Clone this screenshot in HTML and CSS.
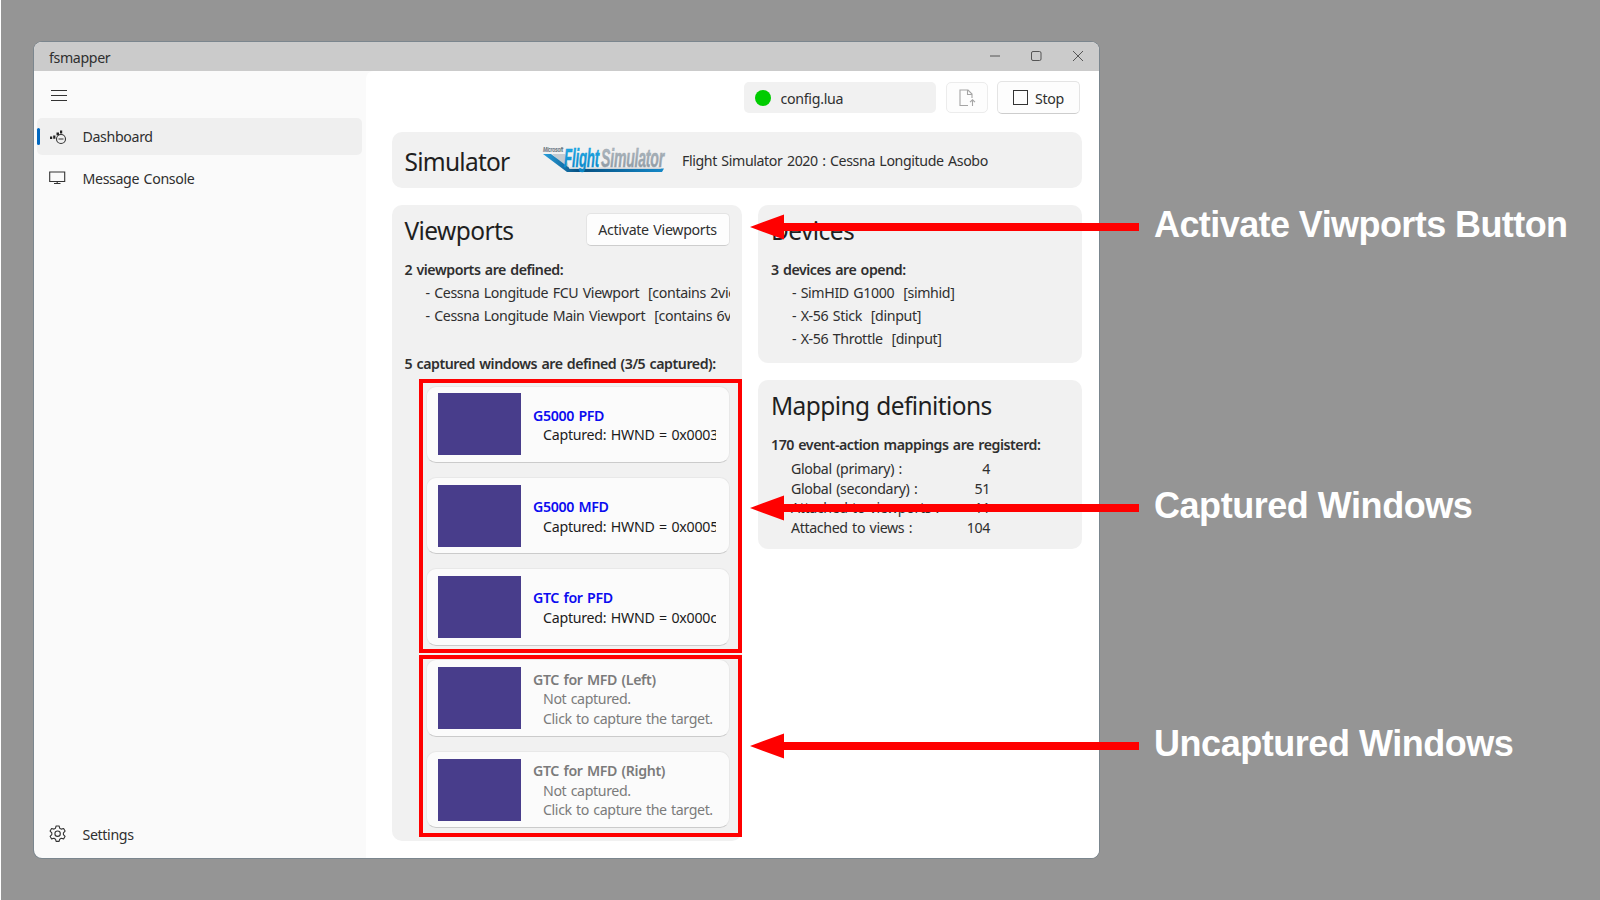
FILE: index.html
```html
<!DOCTYPE html>
<html lang="en">
<head>
<meta charset="utf-8">
<title>fsmapper</title>
<link rel="stylesheet" href="styles.css">
</head>
<body>
<div class="window">
  <header class="titlebar">
    <span class="app-name">fsmapper</span>
    <svg class="controls" width="100" height="14" viewBox="0 0 100 14">
      <path d="M2 7h10"/><rect x="43.5" y="2.500" width="9.500" height="9" rx="1.500"/><path d="M85 2l10 10M95 2L85 12"/>
    </svg>
  </header>
  <div class="body">
    <nav class="nav">
      <svg class="burger" width="16" height="12" viewBox="0 0 16 12"><path d="M0 .5h16M0 5.500h16M0 10.500h16"/></svg>
      <a class="item active">
        <svg class="ico" width="18" height="18" viewBox="0 0 18 18"><path class="fill" d="M1 8.500h2.200v2.500H1zM4.200 7.500h2.200v3.200H4.200zM7.500 4.500h2.500v2.700H7.500zM11 2.500h2.200v3H11z"/><circle cx="12" cy="11" r="4.500"/><path d="M9.500 11h5"/></svg>
        <span>Dashboard</span></a>
      <a class="item">
        <svg class="ico" width="18" height="18" viewBox="0 0 18 18"><path d="M.7 2h15v9.500h-15zM8.200 11.500v2M5 13.500h6.500"/></svg>
        <span>Message Console</span></a>
      <a class="item settings">
        <svg class="ico" width="18" height="18" viewBox="0 0 18 18"><path stroke-linejoin="round" d="M7.100 1h3l.6 2.200 1.500.9 2.400-.6 1.500 2.600-1.700 1.700v1.800l1.700 1.700-1.500 2.600-2.400-.6-1.500.9-.6 2.200h-3l-.6-2.200-1.500-.9-2.400.6-1.500-2.600 1.700-1.700V7.800L1.100 6.100l1.500-2.600 2.400.6 1.500-.9z"/><circle cx="8.600" cy="8.700" r="2.700"/></svg>
        <span>Settings</span></a>
    </nav>
    <main class="main">
      <div class="toolbar">
        <div class="config"><i class="dot"></i><span>config.lua</span></div>
        <button class="btn file"><svg width="18" height="18" viewBox="0 0 18 18"><path d="M10 16.500H2V1h8l4 4v4M9.500 1v4.500H14M14.500 17v-6M12 13.200l2.500-2.400 2.500 2.400"/></svg></button>
        <button class="btn stop"><i class="sq"></i><span>Stop</span></button>
      </div>
      <section class="card sim">
        <h2 class="h-sim">Simulator</h2>
        <svg class="logo" width="124" height="30" viewBox="0 0 124 30">
          <defs>
            <linearGradient id="blue" x1="0" y1="0" x2="1" y2="0"><stop offset="0" stop-color="#2a9fdc"/><stop offset=".3" stop-color="#064f80"/><stop offset="1" stop-color="#1488c8"/></linearGradient>
            <linearGradient id="fl" x1="0" y1="0" x2="0" y2="1"><stop offset="0" stop-color="#25b2ee"/><stop offset="1" stop-color="#087fc0"/></linearGradient>
            <linearGradient id="gr" x1="0" y1="0" x2="0" y2="1"><stop offset="0" stop-color="#b8c1c8"/><stop offset="1" stop-color="#87939d"/></linearGradient>
          </defs>
          <path d="M10 9h13l4 14H24z" fill="#c3cbd1"/>
          <path d="M1 9h8l19 14.500h94l-2 3.500H25z" fill="url(#blue)"/>
          <path d="M28 22.500h90l1.500 1.500H27z" fill="#cfd5d9"/>
          <g font-family="Liberation Sans" font-weight="700" font-style="italic">
            <text x="1" y="7.300" font-size="6.500" textLength="20" lengthAdjust="spacingAndGlyphs" fill="#66727c">Microsoft</text>
            <text class="flight" x="22" y="21.500" font-size="26" textLength="35" lengthAdjust="spacingAndGlyphs" fill="url(#fl)">Flight</text>
            <text class="simul" x="59" y="21.500" font-size="26" textLength="63" lengthAdjust="spacingAndGlyphs" fill="url(#gr)">Simulator</text>
          </g>
        </svg>
        <span class="aircraft">Flight Simulator 2020 : Cessna Longitude Asobo</span>
      </section>
      <div class="columns">
        <section class="card viewports">
          <div class="head"><h2>Viewports</h2><button class="btn activate"><span>Activate Viewports</span></button></div>
          <h3>2 viewports are defined:</h3>
          <ul class="list">
            <li>- Cessna Longitude FCU Viewport&nbsp; [contains 2views]</li>
            <li>- Cessna Longitude Main Viewport&nbsp; [contains 6views]</li>
          </ul>
          <h3 class="s-cap">5 captured windows are defined (3/5 captured):</h3>
          <div class="captures">
            <div class="cap"><i class="thumb"></i><div class="info"><b>G5000 PFD</b><p>Captured: HWND = 0x0003</p></div></div>
            <div class="cap"><i class="thumb"></i><div class="info"><b>G5000 MFD</b><p>Captured: HWND = 0x0005</p></div></div>
            <div class="cap"><i class="thumb"></i><div class="info"><b>GTC for PFD</b><p>Captured: HWND = 0x000c</p></div></div>
            <div class="cap off"><i class="thumb"></i><div class="info"><b>GTC for MFD (Left)</b><p>Not captured.</p><p>Click to capture the target.</p></div></div>
            <div class="cap off"><i class="thumb"></i><div class="info"><b>GTC for MFD (Right)</b><p>Not captured.</p><p>Click to capture the target.</p></div></div>
          </div>
        </section>
        <div class="right">
          <section class="card devices">
            <div class="head"><h2>Devices</h2></div>
            <h3>3 devices are opend:</h3>
            <ul class="list">
              <li>- SimHID G1000&nbsp; [simhid]</li>
              <li>- X-56 Stick&nbsp; [dinput]</li>
              <li>- X-56 Throttle&nbsp; [dinput]</li>
            </ul>
          </section>
          <section class="card mapping">
            <div class="head"><h2>Mapping definitions</h2></div>
            <h3>170 event-action mappings are registerd:</h3>
            <dl class="stats">
              <dt>Global (primary) :</dt><dd>4</dd>
              <dt>Global (secondary) :</dt><dd>51</dd>
              <dt>Attached to viewports :</dt><dd>11</dd>
              <dt>Attached to views :</dt><dd>104</dd>
            </dl>
          </section>
        </div>
      </div>
    </main>
  </div>
</div>
<div class="frame captured"></div>
<div class="frame uncaptured"></div>
<svg class="arrow a1" width="390" height="26" viewBox="0 0 390 26"><path d="M0 13L34 .5V9h355v8H34v8.500z"/></svg>
<svg class="arrow a2" width="390" height="26" viewBox="0 0 390 26"><path d="M0 13L34 .5V9h355v8H34v8.500z"/></svg>
<svg class="arrow a3" width="390" height="26" viewBox="0 0 390 26"><path d="M0 13L34 .5V9h355v8H34v8.500z"/></svg>
<div class="note a1">Activate Viwports Button</div>
<div class="note a2">Captured Windows</div>
<div class="note a3">Uncaptured Windows</div>
</body>
</html>
```
FILE: styles.css
```css
* { box-sizing: border-box; margin: 0; padding: 0; }
body {
  position: relative; width: 1600px; height: 900px; overflow: hidden;
  background: #959595; border-left: 1px solid #fff;
  font: 14.2px/20px "Noto Sans", sans-serif; letter-spacing: -.36px; word-spacing: 1.1px; color: #2f2f2f;
}
svg { display: block; flex: none; fill: none; stroke: #333; stroke-width: 1.1; }
svg text, .logo path { stroke: none; }
i { display: block; flex: none; }
span, li, h2, h3, b, p, dt, dd, .note { white-space: nowrap; }
h2 { font-size: 24.5px; line-height: 32px; font-weight: 400; color: #1f1f1f; letter-spacing: -.6px; }
h3 { font-size: 14.2px; line-height: 20px; font-weight: 600; letter-spacing: -.46px; }
ul { list-style: none; }

.window {
  position: absolute; left: 33px; top: 42px; width: 1064.500px; height: 815.500px;
  display: flex; flex-direction: column; overflow: hidden;
  background: #fafafa; border-radius: 8px; box-shadow: 0 0 0 1px #7b868e;
}
.titlebar {
  flex: none; height: 29px; background: #cbcbcb;
  display: flex; align-items: center; justify-content: space-between; padding: 3px 11px 0 15px;
}
.controls { stroke: #555; stroke-width: 1; margin-top: -5px; }
.body { flex: 1; display: flex; min-height: 0; }
.nav { width: 332px; flex: none; padding: 19px 4px 5px 3px; display: flex; flex-direction: column; }
.burger { margin: 0 0 16px 14px; }
.item { height: 37px; margin-bottom: 5px; display: flex; align-items: center; padding-left: 12px; gap: 15.500px; border-radius: 5px; position: relative; }
.item span { padding-top: 1px; }
.item.active { background: #efefef; }
.item.active::before { content: ""; position: absolute; left: 0; top: 10px; width: 3px; height: 17px; border-radius: 2px; background: #0067c0; }
.fill { fill: #222; stroke: none; }
.settings { margin: auto 0 0; }

.main { flex: 1; background: #fff; border-top-left-radius: 8px; padding: 10px 16.500px 17px 26px; display: flex; flex-direction: column; }
.toolbar { display: flex; justify-content: flex-end; align-items: center; gap: 10px; height: 33px; margin: 0 2px 18px 0; }
.config { width: 192px; height: 31px; background: #f1f1f1; border-radius: 5px; display: flex; align-items: center; gap: 9.500px; padding-left: 11px; }
.config span, .stop span { padding-top: 2px; letter-spacing: -.3px; }
.dot { width: 16px; height: 16px; border-radius: 50%; background: #00cc00; }
.btn { font: inherit; letter-spacing: inherit; word-spacing: inherit; color: inherit; background: #fdfdfd; border: 1px solid #e4e4e4; border-bottom-color: #cdcdcd; border-radius: 5px; display: flex; align-items: center; justify-content: center; }
.file { width: 42px; height: 31px; border-color: #ececec; margin-right: -1px; }
.file svg { stroke: #a5a5a5; }
.stop { width: 83px; height: 33px; gap: 7px; }
.sq { width: 15px; height: 15px; border: 1.3px solid #333; }
.card { background: #f1f1f1; border-radius: 10px; }
.sim { height: 56px; display: flex; align-items: center; padding-left: 12.500px; margin-bottom: 17px; }
.h-sim { width: 137.500px; padding-top: 3px; letter-spacing: -.75px; }
.logo { margin-right: 16px; }
.flight { stroke: #109bd8; stroke-width: .5; }
.simul { stroke: #9ba6ae; stroke-width: .5; }
.aircraft { padding-top: 2px; letter-spacing: -.39px; }
.columns { flex: 1; display: flex; gap: 16px; min-height: 0; }
.viewports { width: 350px; padding: 8px 12px 8px 12.500px; }
.head { display: flex; justify-content: space-between; align-items: center; height: 36px; margin-bottom: 11px; }
.activate { width: 144px; height: 33px; margin: -3px .5px 0 0; letter-spacing: -.3px; }
.activate span { padding-top: 1px; }
.list { padding: 2px 0 0 21px; overflow: hidden; }
.list li { line-height: 22.800px; }
.s-cap { margin: 26px 0 12px; }
.captures { margin-left: 21px; width: 304px; display: flex; flex-direction: column; gap: 13.800px; }
.cap { height: 77.500px; display: flex; align-items: center; background: #fbfbfb; border: 1px solid #e8e8e8; border-bottom-color: #cbcbcb; border-radius: 10px; padding: 0 12.500px 0 11.500px; gap: 12px; }
.thumb { width: 83px; height: 62px; background: #483d8b; }
.info { flex: 1; min-width: 0; overflow: hidden; line-height: 19.500px; padding-top: 2px; }
.info b { display: block; font-weight: 600; color: #0b0bf0; }
.info p { margin-left: 10px; color: #1c1c1c; overflow: hidden; letter-spacing: -.25px; word-spacing: 1px; }
.off .info b, .off .info p { color: #7b7b7b; }
.off .info p { letter-spacing: -.38px; }
.right { flex: 1; display: flex; flex-direction: column; gap: 17px; }
.devices { height: 158px; padding: 8px 13px; }
.mapping { height: 169px; padding: 8px 13px; }
.stats { display: grid; grid-template-columns: 120px 79px; line-height: 19.700px; padding: 4px 0 0 20px; }
.stats dd { text-align: right; }

.frame { position: absolute; left: 418px; width: 323px; border: 4px solid #f00; }
.captured { top: 379px; height: 274px; }
.uncaptured { top: 655px; height: 181.500px; }
.arrow { position: absolute; left: 749px; fill: #f00; stroke: none; }
.arrow.a1 { top: 214px; }
.arrow.a2 { top: 495px; }
.arrow.a3 { top: 733px; }
.note { position: absolute; left: 1153px; color: #fff; font: 700 36px/40px "Liberation Sans", Arial, sans-serif; letter-spacing: -.46px; word-spacing: 0; }
.note.a1 { top: 205px; letter-spacing: -.58px; }
.note.a2 { top: 486px; }
.note.a3 { top: 724px; }
```
